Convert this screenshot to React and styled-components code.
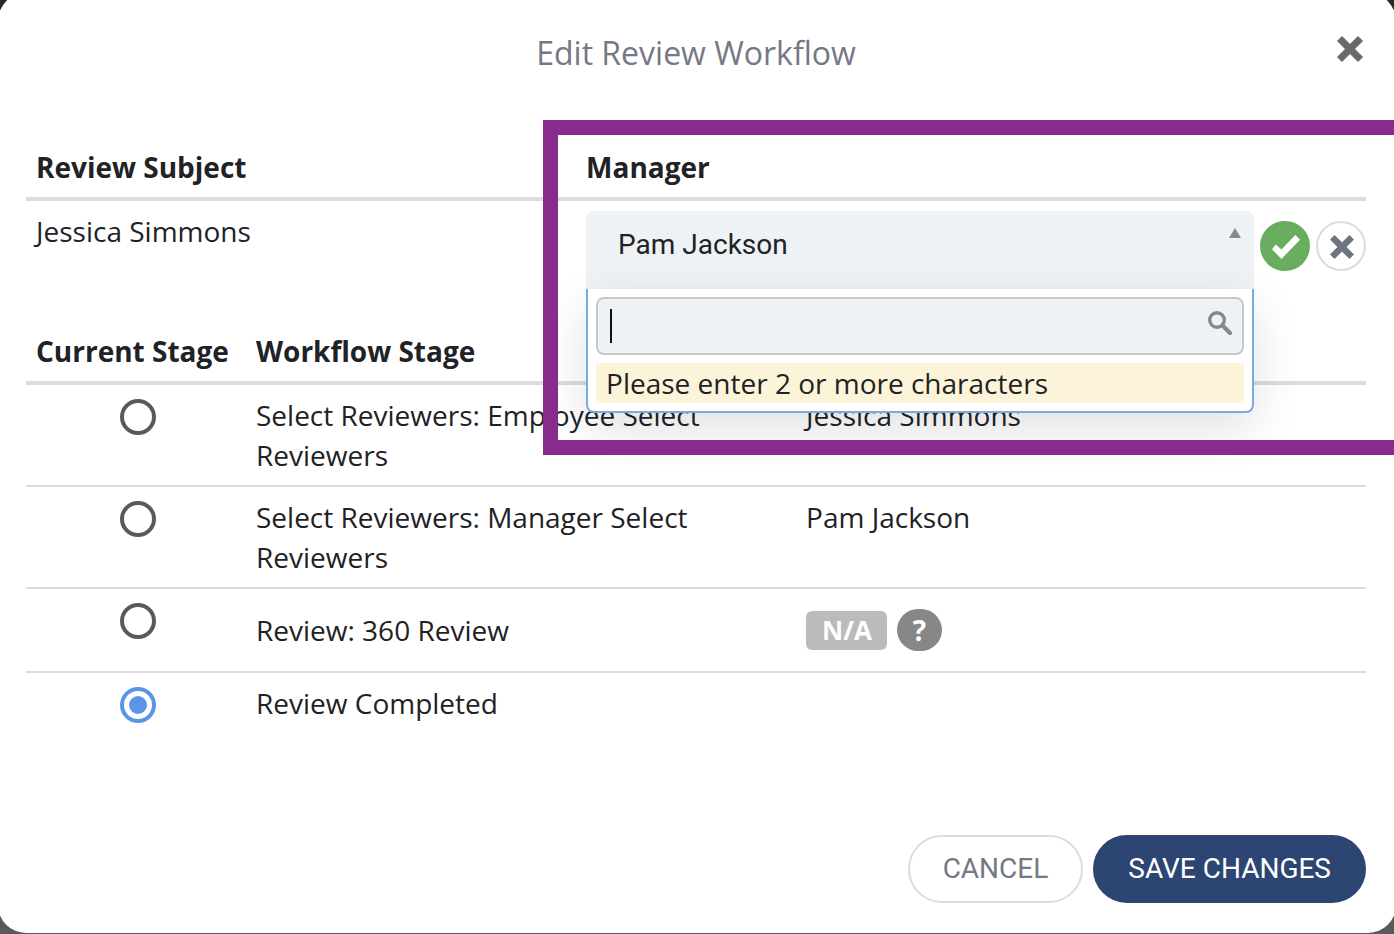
import React, { useState } from "react";
import styled, { createGlobalStyle } from "styled-components";

const GlobalStyle = createGlobalStyle`
  *, *::before, *::after { box-sizing: border-box; }
  body {
    margin: 0;
    color: #212226;
    font: 400 28px/40px "Open Sans", sans-serif;
  }
`;

const Backdrop = styled.div`
  display: flex;
  flex-direction: column;
  min-height: 100vh;
  overflow: hidden;
  background: linear-gradient(#29282b, #5a5a5a);
`;

const Modal = styled.main`
  flex: 1;
  display: flex;
  flex-direction: column;
  margin: -7px -2px 1px;
  padding: 38px 30px 30px 28px;
  border-radius: 28px;
  background: #fff;
`;

const Header = styled.header`
  position: relative;
  margin-bottom: 62px;
  text-align: center;
`;

const Title = styled.h1`
  margin: 0;
  color: #757885;
  font: 400 32px/44px "Open Sans", sans-serif;
`;

const CloseButton = styled.button`
  position: absolute;
  top: 0;
  right: 0;
  display: flex;
  padding: 5px 3px;
  border: 0;
  background: none;
  color: #696969;
`;

const Table = styled.table`
  width: 100%;
  table-layout: fixed;
  border-collapse: separate;
  border-spacing: 0;
  margin-bottom: ${(p) => (p.$spaced ? "22px" : "0")};
`;

const HeadCell = styled.th`
  position: relative;
  width: ${(p) => p.$width || "auto"};
  padding: 10px;
  border-bottom: 4px solid #dcdcdc;
  font-weight: 700;
  text-align: left;
  white-space: nowrap;
`;

const Row = styled.tr`
  &:not(:last-child) > td { border-bottom: 2px solid #dcdcdc; }
`;

const Cell = styled.td`
  padding: ${(p) => (p.$flush ? "10px 0 10px 10px" : "10px")};
  vertical-align: ${(p) => (p.$middle ? "middle" : "top")};
`;

const RadioCell = styled.td`
  padding: 14px 8px 10px 12px;
  vertical-align: top;
  line-height: 0;
  text-align: center;
`;

const Radio = styled.input`
  appearance: none;
  width: 36px;
  height: 36px;
  margin: 0;
  padding: 5px;
  border: 4px solid #58595b;
  border-radius: 50%;
  background: #fff content-box;

  &:checked {
    border-color: #5b95e5;
    background-color: #5b95e5;
  }
`;

const Highlight = styled.div`
  position: absolute;
  z-index: 5;
  top: -17px;
  left: -33px;
  right: -32px;
  height: 335px;
  border: 15px solid #892b8a;
  border-right: 0;
  pointer-events: none;
`;

const Editor = styled.div`
  display: flex;
  align-items: flex-start;
  gap: 6px;
`;

const Picker = styled.div`
  position: relative;
  flex: 1;
  display: flex;
`;

const Select = styled.select`
  appearance: none;
  width: 100%;
  height: 78px;
  padding: 0 32px 10px;
  border: 0;
  border-radius: 8px 8px 0 0;
  background: #eef2f5;
  color: #212226;
  font: 400 28px/40px Roboto, sans-serif;
`;

const Arrow = styled.svg`
  position: absolute;
  top: 17px;
  right: 13px;
`;

const Dropdown = styled.div`
  position: absolute;
  z-index: 2;
  top: 100%;
  left: 0;
  right: 0;
  display: flex;
  flex-direction: column;
  gap: 8px;
  padding: 8px;
  border: 2px solid #75ace4;
  border-top: 0;
  border-radius: 0 0 8px 8px;
  background: #fff;
  box-shadow: 0 16px 48px rgba(0, 0, 0, 0.12);
`;

const SearchField = styled.label`
  display: flex;
  align-items: center;
  height: 58px;
  padding: 0 10px 6px 12px;
  border: 2px solid #c8c8c8;
  border-radius: 8px;
  background: #eef2f5;
`;

const Caret = styled.span`
  width: 2px;
  height: 34px;
  margin-top: 6px;
  background: #111;
`;

const SearchInput = styled.input`
  flex: 1;
  min-width: 0;
  padding: 0;
  border: 0;
  outline: 0;
  background: none;
  caret-color: transparent;
  font: inherit;
`;

const Hint = styled.div`
  padding: 0 10px;
  background: #fcf4d8;
`;

const RoundButton = styled.button`
  display: flex;
  align-items: center;
  justify-content: center;
  width: 50px;
  height: 50px;
  margin-top: 10px;
  padding: 2px 0 0 2px;
  border: 2px solid ${(p) => (p.$confirm ? "#69ad5e" : "#dcdcdc")};
  border-radius: 50%;
  background: ${(p) => (p.$confirm ? "#69ad5e" : "#fff")};
  color: ${(p) => (p.$confirm ? "#fff" : "#6f7483")};
`;

const Status = styled.div`
  display: flex;
  align-items: center;
  gap: 10px;
  height: 62px;
`;

const Tag = styled.span`
  height: 39px;
  padding: 0 15px 0 16px;
  border-radius: 6px;
  background: #bbb;
  color: #fff;
  font: 700 26px/38px "Open Sans", sans-serif;
`;

const HelpButton = styled.button`
  width: 45px;
  height: 42px;
  padding: 0;
  border: 0;
  border-radius: 21px;
  background: #878787;
  color: #fff;
  font: 700 28px/42px "Open Sans", sans-serif;
`;

const Footer = styled.footer`
  display: flex;
  justify-content: flex-end;
  gap: 10px;
  margin-top: auto;
  padding-top: 40px;
`;

const Button = styled.button`
  height: 68px;
  padding: 0 33px;
  border: 2px solid ${(p) => (p.$primary ? "#2d4572" : "#dcdcdc")};
  border-radius: 34px;
  background: ${(p) => (p.$primary ? "#2d4572" : "#fff")};
  color: ${(p) => (p.$primary ? "#fff" : "#757885")};
  font: 400 28px/40px Roboto, sans-serif;
`;

const Cross = ({ size }) => (
  <svg width={size} height={size} viewBox="0 0 26 26" fill="currentColor" aria-hidden="true">
    <path
      d="M.5 5 5 .5l8 8 8-8L25.500 5l-8 8 8 8-4.500 4.500-8-8-8 8L.5 21l8-8z"
      stroke="currentColor"
      strokeLinejoin="round"
    />
  </svg>
);

const Check = () => (
  <svg width="28" height="24" viewBox="0 0 28 24" fill="currentColor" aria-hidden="true">
    <path d="M0 14.200 3.800 9.500 9.500 14.500 23.300 0 28 4.700 9.500 24z" />
  </svg>
);

const Magnifier = () => (
  <svg width="24" height="24" viewBox="0 0 24 24" fill="none" stroke="#888" aria-hidden="true">
    <circle cx="9" cy="9" r="7.300" strokeWidth="3.400" />
    <path d="m14.500 14.500 7.500 7.500" strokeWidth="4.200" strokeLinecap="round" />
  </svg>
);

const stages = [
  { id: "employee", name: "Select Reviewers: Employee Select Reviewers", person: "Jessica Simmons" },
  { id: "manager", name: "Select Reviewers: Manager Select Reviewers", person: "Pam Jackson" },
  { id: "review", name: "Review: 360 Review", unavailable: true },
  { id: "done", name: "Review Completed" },
];

function ManagerPicker() {
  return (
    <Editor>
      <Picker>
        <Select aria-label="Manager" defaultValue="pam">
          <option value="pam">Pam Jackson</option>
        </Select>
        <Arrow width="12" height="10" viewBox="0 0 12 10" aria-hidden="true">
          <path d="M6 0l6 10H0z" fill="#888" />
        </Arrow>
        <Dropdown>
          <SearchField>
            <Caret />
            <SearchInput type="text" aria-label="Search people" />
            <Magnifier />
          </SearchField>
          <Hint role="status">Please enter 2 or more characters</Hint>
        </Dropdown>
      </Picker>
      <RoundButton type="button" $confirm aria-label="Confirm manager">
        <Check />
      </RoundButton>
      <RoundButton type="button" aria-label="Discard manager">
        <Cross size={24} />
      </RoundButton>
    </Editor>
  );
}

export default function App() {
  const [current, setCurrent] = useState("done");

  return (
    <Backdrop>
      <GlobalStyle />
      <Modal>
        <Header>
          <Title>Edit Review Workflow</Title>
          <CloseButton type="button" aria-label="Close">
            <Cross size={26} />
          </CloseButton>
        </Header>

        <Table $spaced>
          <thead>
            <tr>
              <HeadCell $width="41.05%">Review Subject</HeadCell>
              <HeadCell>
                Manager
                <Highlight />
              </HeadCell>
            </tr>
          </thead>
          <tbody>
            <Row>
              <Cell>Jessica Simmons</Cell>
              <Cell $flush>
                <ManagerPicker />
              </Cell>
            </Row>
          </tbody>
        </Table>

        <Table>
          <thead>
            <tr>
              <HeadCell $width="220px">Current Stage</HeadCell>
              <HeadCell $width="41.05%">Workflow Stage</HeadCell>
              <HeadCell aria-label="Assignee" />
            </tr>
          </thead>
          <tbody>
            {stages.map((stage) => (
              <Row key={stage.id}>
                <RadioCell>
                  <Radio
                    type="radio"
                    name="stage"
                    id={stage.id}
                    checked={current === stage.id}
                    onChange={() => setCurrent(stage.id)}
                  />
                </RadioCell>
                <Cell $middle={stage.unavailable}>
                  <label htmlFor={stage.id}>{stage.name}</label>
                </Cell>
                <Cell>
                  {stage.unavailable ? (
                    <Status>
                      <Tag>N/A</Tag>
                      <HelpButton type="button">?</HelpButton>
                    </Status>
                  ) : (
                    stage.person
                  )}
                </Cell>
              </Row>
            ))}
          </tbody>
        </Table>

        <Footer>
          <Button type="button">CANCEL</Button>
          <Button type="button" $primary>SAVE CHANGES</Button>
        </Footer>
      </Modal>
    </Backdrop>
  );
}
